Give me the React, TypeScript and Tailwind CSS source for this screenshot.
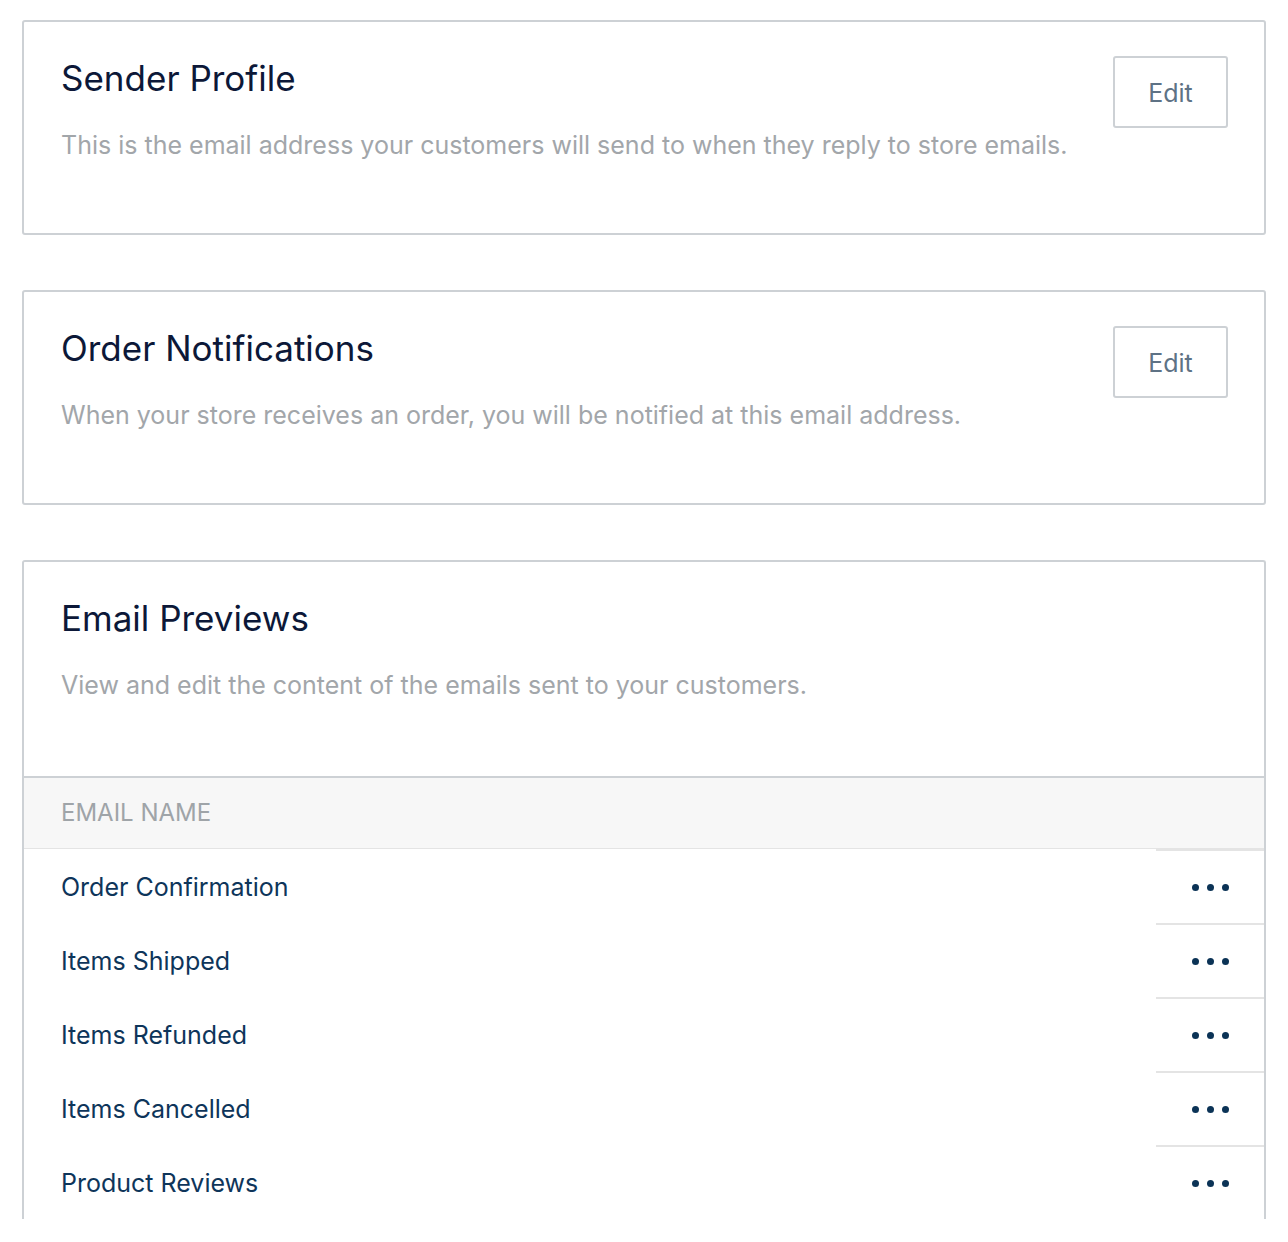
import React from "react";

const EMAILS = [
  "Order Confirmation",
  "Items Shipped",
  "Items Refunded",
  "Items Cancelled",
  "Product Reviews",
];

interface SettingsCardProps {
  title: string;
  description: string;
}

const SettingsCard: React.FC<SettingsCardProps> = ({ title, description }) => {
  return (
    <div className="flex h-[215px] justify-between rounded-[3px] border-2 border-[#cdd1d5] pl-[37px] pr-[36px] pt-[34px]">
      <div>
        <h2 className="text-[35px] leading-[44px] text-[#0c1838]">{title}</h2>
        <p className="mt-[30px] text-[25px] leading-[30px] text-[#a2a6aa]">{description}</p>
      </div>
      <button className="h-[72px] w-[115px] rounded-[3px] border-2 border-[#cdd1d5] pt-[3px] text-[25px] text-[#5e7285]">
        Edit
      </button>
    </div>
  );
};

const Dots: React.FC = () => (
  <div className="flex gap-[8px]">
    <span className="h-[7px] w-[7px] rounded-full bg-[#0b3356]" />
    <span className="h-[7px] w-[7px] rounded-full bg-[#0b3356]" />
    <span className="h-[7px] w-[7px] rounded-full bg-[#0b3356]" />
  </div>
);

export default function App() {
  return (
    <div className="min-h-screen bg-white px-[22px] pt-[20px] font-['Inter',sans-serif]">
      <SettingsCard
        title="Sender Profile"
        description="This is the email address your customers will send to when they reply to store emails."
      />
      <div className="mt-[55px]">
        <SettingsCard
          title="Order Notifications"
          description="When your store receives an order, you will be notified at this email address."
        />
      </div>

      <div className="mt-[55px] rounded-t-[3px] border-x-2 border-t-2 border-[#cdd1d5]">
        <div className="h-[214px] pl-[37px] pt-[34px]">
          <h2 className="text-[35px] leading-[44px] text-[#0c1838]">Email Previews</h2>
          <p className="mt-[30px] text-[25px] leading-[30px] text-[#a2a6aa]">
            View and edit the content of the emails sent to your customers.
          </p>
        </div>
        <div className="flex h-[73px] items-center border-y-2 border-b border-t-[#cdd1d5] border-b-[#e4e4e4] bg-[#f7f7f7] pl-[37px] text-[24px] uppercase text-[#9fa4a8]">
          Email Name
        </div>
        {EMAILS.map((name) => (
          <div key={name} className="flex h-[74px]">
            <div className="flex flex-1 items-center pl-[37px] pt-[3px] text-[25px] text-[#0e355a]">{name}</div>
            <div className="flex w-[108px] items-center justify-center border-t-2 border-[#e4e4e4]">
              <Dots />
            </div>
          </div>
        ))}
      </div>
    </div>
  );
}
